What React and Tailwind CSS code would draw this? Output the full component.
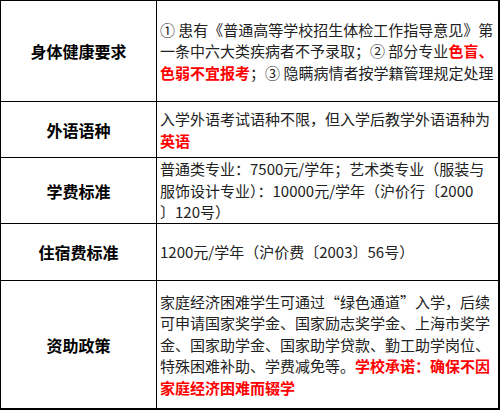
const font = { fontFamily: '"Noto Sans CJK SC", "Noto Sans", sans-serif' };

function Red({ children }) {
  return <span className="font-bold text-[#ff0000]">{children}</span>;
}

const rows = [
  {
    label: "身体健康要求",
    h: "h-[101px]",
    lines: [
      <>① 患有《普通高等学校招生体检工作指导意见》第</>,
      <>一条中六大类疾病者不予录取；② 部分专业<Red>色盲、</Red></>,
      <><Red>色弱不宜报考</Red>；③ 隐瞒病情者按学籍管理规定处理</>,
    ],
  },
  {
    label: "外语语种",
    h: "h-[56px]",
    lines: [
      <>入学外语考试语种不限，但入学后教学外语语种为</>,
      <Red>英语</Red>,
    ],
  },
  {
    label: "学费标准",
    h: "h-[66px]",
    lines: [
      <>普通类专业：7500元/学年；艺术类专业（服装与</>,
      <>服饰设计专业）：10000元/学年（沪价行〔2000</>,
      <>〕120号）</>,
    ],
  },
  {
    label: "住宿费标准",
    h: "h-[57px]",
    lines: [<>1200元/学年（沪价费〔2003〕56号）</>],
  },
  {
    label: "资助政策",
    h: "h-[127px]",
    last: true,
    lines: [
      <>家庭经济困难学生可通过“绿色通道”入学，后续</>,
      <>可申请国家奖学金、国家励志奖学金、上海市奖学</>,
      <>金、国家助学金、国家助学贷款、勤工助学岗位、</>,
      <>特殊困难补助、学费减免等。<Red>学校承诺：确保不因</Red></>,
      <Red>家庭经济困难而辍学</Red>,
    ],
  },
];

export default function App() {
  return (
    <div className="w-[501px] h-[410px] bg-white" style={font}>
      <div className="w-[500px] h-[410px] border-t border-l border-r-2 border-b-2 border-black flex flex-col">
        {rows.map((row, i) => (
          <div
            key={i}
            className={`flex shrink-0 ${row.h} ${row.last ? "" : "border-b border-black"}`}
          >
            <div className="w-[156px] shrink-0 border-r border-black flex items-center justify-center text-[16px] font-bold text-black">
              {row.label}
            </div>
            <div className="flex-1 flex flex-col justify-center pl-[3px] text-[15px] leading-[21.4px] text-[#222] whitespace-nowrap overflow-hidden">
              {row.lines.map((l, j) => (
                <div key={j}>{l}</div>
              ))}
            </div>
          </div>
        ))}
      </div>
    </div>
  );
}
